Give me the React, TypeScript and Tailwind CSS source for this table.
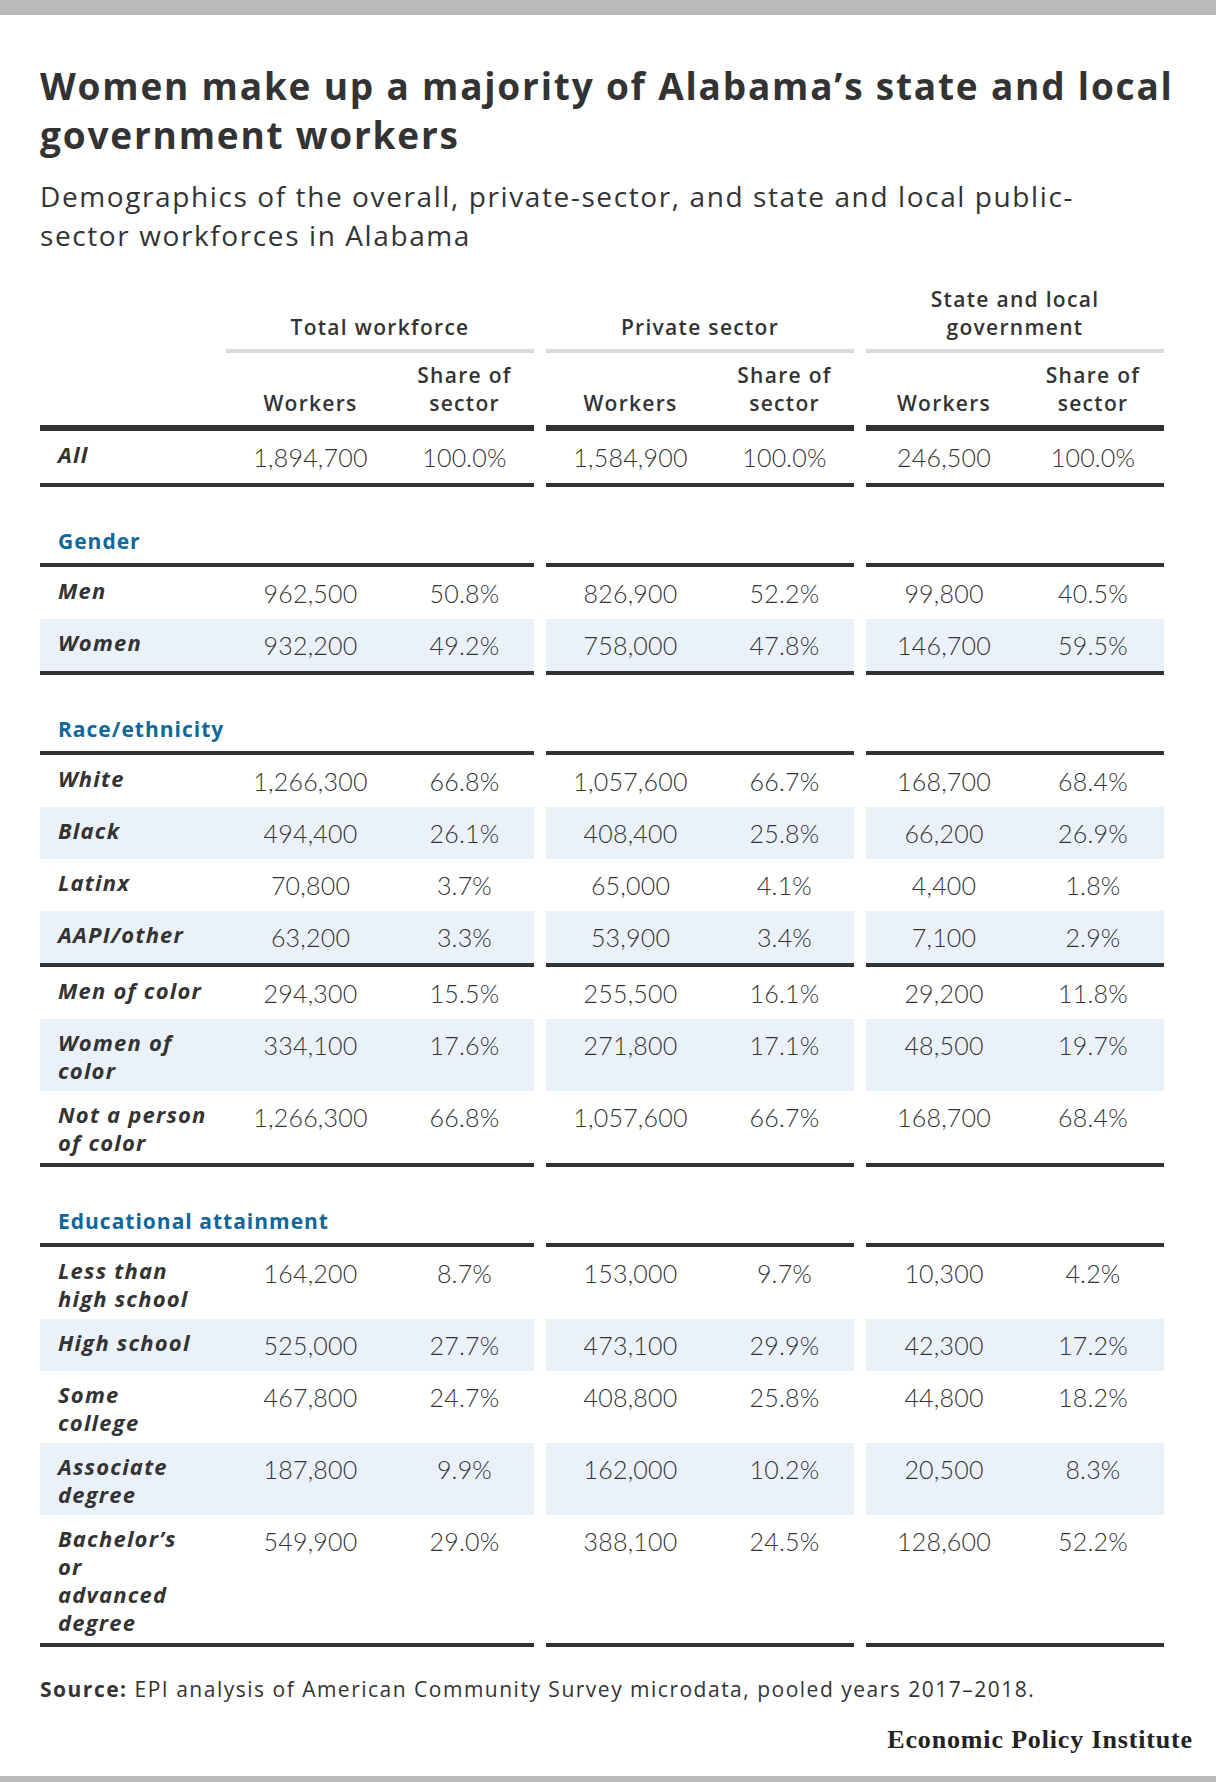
import React from "react";

type Row = {
  label: React.ReactNode;
  values: string[];
  shaded?: boolean;
  divider?: boolean;
};

type Section = { title: string; rows: Row[] };

const sections: Section[] = [
  {
    title: "Gender",
    rows: [
      { label: "Men", values: ["962,500", "50.8%", "826,900", "52.2%", "99,800", "40.5%"] },
      { label: "Women", values: ["932,200", "49.2%", "758,000", "47.8%", "146,700", "59.5%"], shaded: true },
    ],
  },
  {
    title: "Race/ethnicity",
    rows: [
      { label: "White", values: ["1,266,300", "66.8%", "1,057,600", "66.7%", "168,700", "68.4%"] },
      { label: "Black", values: ["494,400", "26.1%", "408,400", "25.8%", "66,200", "26.9%"], shaded: true },
      { label: "Latinx", values: ["70,800", "3.7%", "65,000", "4.1%", "4,400", "1.8%"] },
      { label: "AAPI/other", values: ["63,200", "3.3%", "53,900", "3.4%", "7,100", "2.9%"], shaded: true, divider: true },
      { label: "Men of color", values: ["294,300", "15.5%", "255,500", "16.1%", "29,200", "11.8%"] },
      {
        label: (<>Women of<br />color</>),
        values: ["334,100", "17.6%", "271,800", "17.1%", "48,500", "19.7%"],
        shaded: true,
      },
      {
        label: (<>Not a person<br />of color</>),
        values: ["1,266,300", "66.8%", "1,057,600", "66.7%", "168,700", "68.4%"],
      },
    ],
  },
  {
    title: "Educational attainment",
    rows: [
      {
        label: (<>Less than<br />high school</>),
        values: ["164,200", "8.7%", "153,000", "9.7%", "10,300", "4.2%"],
      },
      { label: "High school", values: ["525,000", "27.7%", "473,100", "29.9%", "42,300", "17.2%"], shaded: true },
      {
        label: (<>Some<br />college</>),
        values: ["467,800", "24.7%", "408,800", "25.8%", "44,800", "18.2%"],
      },
      {
        label: (<>Associate<br />degree</>),
        values: ["187,800", "9.9%", "162,000", "10.2%", "20,500", "8.3%"],
        shaded: true,
      },
      {
        label: (<>Bachelor’s<br />or<br />advanced<br />degree</>),
        values: ["549,900", "29.0%", "388,100", "24.5%", "128,600", "52.2%"],
      },
    ],
  },
];

const sans = { fontFamily: "'Open Sans', 'Noto Sans', sans-serif" };
const numFont = { fontFamily: "Lato, 'Open Sans', sans-serif" };

function Num({ v, state }: { v: string; state?: boolean }) {
  return (
    <div
      className={`${state ? "w-[149px] pl-[7px]" : "w-[154px] pl-[15px]"} py-2 text-center text-[25px] font-light leading-[36px] tracking-[0.2px] text-[#333]`}
      style={numFont}
    >
      {v}
    </div>
  );
}

function DataRow({ row }: { row: Row }) {
  const bg = row.shaded ? "bg-[#eaf1f9]" : "bg-white";
  const border = row.divider ? "border-b-4 border-[#333]" : "";
  return (
    <div className="flex gap-3">
      <div className={`flex w-[494px] items-start ${bg} ${border}`}>
        <div className="w-[186px] pb-[7px] pl-[18px] pt-[9px] text-[22px] font-bold italic leading-[28px] tracking-[1.2px] text-[#333]">
          {row.label}
        </div>
        <Num v={row.values[0]} />
        <Num v={row.values[1]} />
      </div>
      <div className={`flex w-[308px] items-start ${bg} ${border}`}>
        <Num v={row.values[2]} />
        <Num v={row.values[3]} />
      </div>
      <div className={`flex w-[298px] items-start ${bg} ${border}`}>
        <Num v={row.values[4]} state />
        <Num v={row.values[5]} state />
      </div>
    </div>
  );
}

function RuleRow({ thick }: { thick?: boolean }) {
  const h = thick ? "h-[6px]" : "h-1";
  return (
    <div className="flex gap-3">
      <div className={`w-[494px] ${h} bg-[#333]`} />
      <div className={`w-[308px] ${h} bg-[#333]`} />
      <div className={`w-[298px] ${h} bg-[#333]`} />
    </div>
  );
}

export default function App() {
  return (
    <div className="flex h-[1782px] w-[1216px] flex-col bg-white text-[#333]" style={sans}>
      <div className="h-[15px] bg-[#bbbbbb]" />

      <div className="px-10">
        <h1 className="mt-[46px] whitespace-nowrap text-[37px] font-bold leading-[49px] tracking-[1.8px] text-[#333]">
          Women make up a majority of Alabama’s state and local
          <br />
          government workers
        </h1>
        <p className="mt-[18px] whitespace-nowrap text-[28px] leading-[39px] tracking-[1.6px] text-[#333]">
          Demographics of the overall, private-sector, and state and local public-
          <br />
          sector workforces in Alabama
        </p>

        {/* Group headers */}
        <div className="mt-[30px] flex items-end gap-3 text-[21px] font-semibold leading-[28px] tracking-[1.3px]">
          <div className="flex w-[494px] items-end">
            <div className="w-[186px]" />
            <div className="w-[308px] border-b-4 border-[#dadada] pb-2 text-center">Total workforce</div>
          </div>
          <div className="w-[308px] border-b-4 border-[#dadada] pb-2 text-center">Private sector</div>
          <div className="w-[298px] border-b-4 border-[#dadada] pb-2 text-center">
            State and local
            <br />
            government
          </div>
        </div>

        {/* Column headers */}
        <div className="flex items-end gap-3 text-[21px] font-semibold leading-[28px] tracking-[1.3px]">
          {[0, 1, 2].map((g) => (
            <div
              key={g}
              className={`flex items-end ${g === 0 ? "w-[494px]" : g === 1 ? "w-[308px]" : "w-[298px]"}`}
            >
              {g === 0 && <div className="w-[186px]" />}
              <div className={`${g === 2 ? "w-[149px] pl-[7px]" : "w-[154px] pl-[15px]"} py-2 text-center`}>
                Workers
              </div>
              <div className={`${g === 2 ? "w-[149px] pl-[7px]" : "w-[154px] pl-[15px]"} py-2 text-center`}>
                Share of
                <br />
                sector
              </div>
            </div>
          ))}
        </div>
        <RuleRow thick />
        <DataRow row={{ label: "All", values: ["1,894,700", "100.0%", "1,584,900", "100.0%", "246,500", "100.0%"] }} />
        <RuleRow />

        {sections.map((s) => (
          <div key={s.title}>
            <div className="pb-2 pl-[18px] pt-10 text-[21px] font-bold leading-[28px] tracking-[1px] text-[#0f689c]">
              {s.title}
            </div>
            <RuleRow />
            {s.rows.map((r, i) => (
              <DataRow key={i} row={r} />
            ))}
            <RuleRow />
          </div>
        ))}

        <p className="mt-7 whitespace-nowrap text-[21px] leading-[28px] tracking-[1.5px] text-[#333]">
          <span className="font-bold">Source:</span> EPI analysis of American Community Survey microdata, pooled years
          2017–2018.
        </p>
        <div
          className="-mr-[17px] mt-[22px] text-right text-[26px] font-bold leading-[30px] tracking-[0.85px] text-[#222]"
          style={{ fontFamily: "'Liberation Serif', 'DejaVu Serif', serif" }}
        >
          Economic Policy Institute
        </div>
      </div>

      <div className="mt-auto h-[6px] bg-[#bbbbbb]" />
    </div>
  );
}
